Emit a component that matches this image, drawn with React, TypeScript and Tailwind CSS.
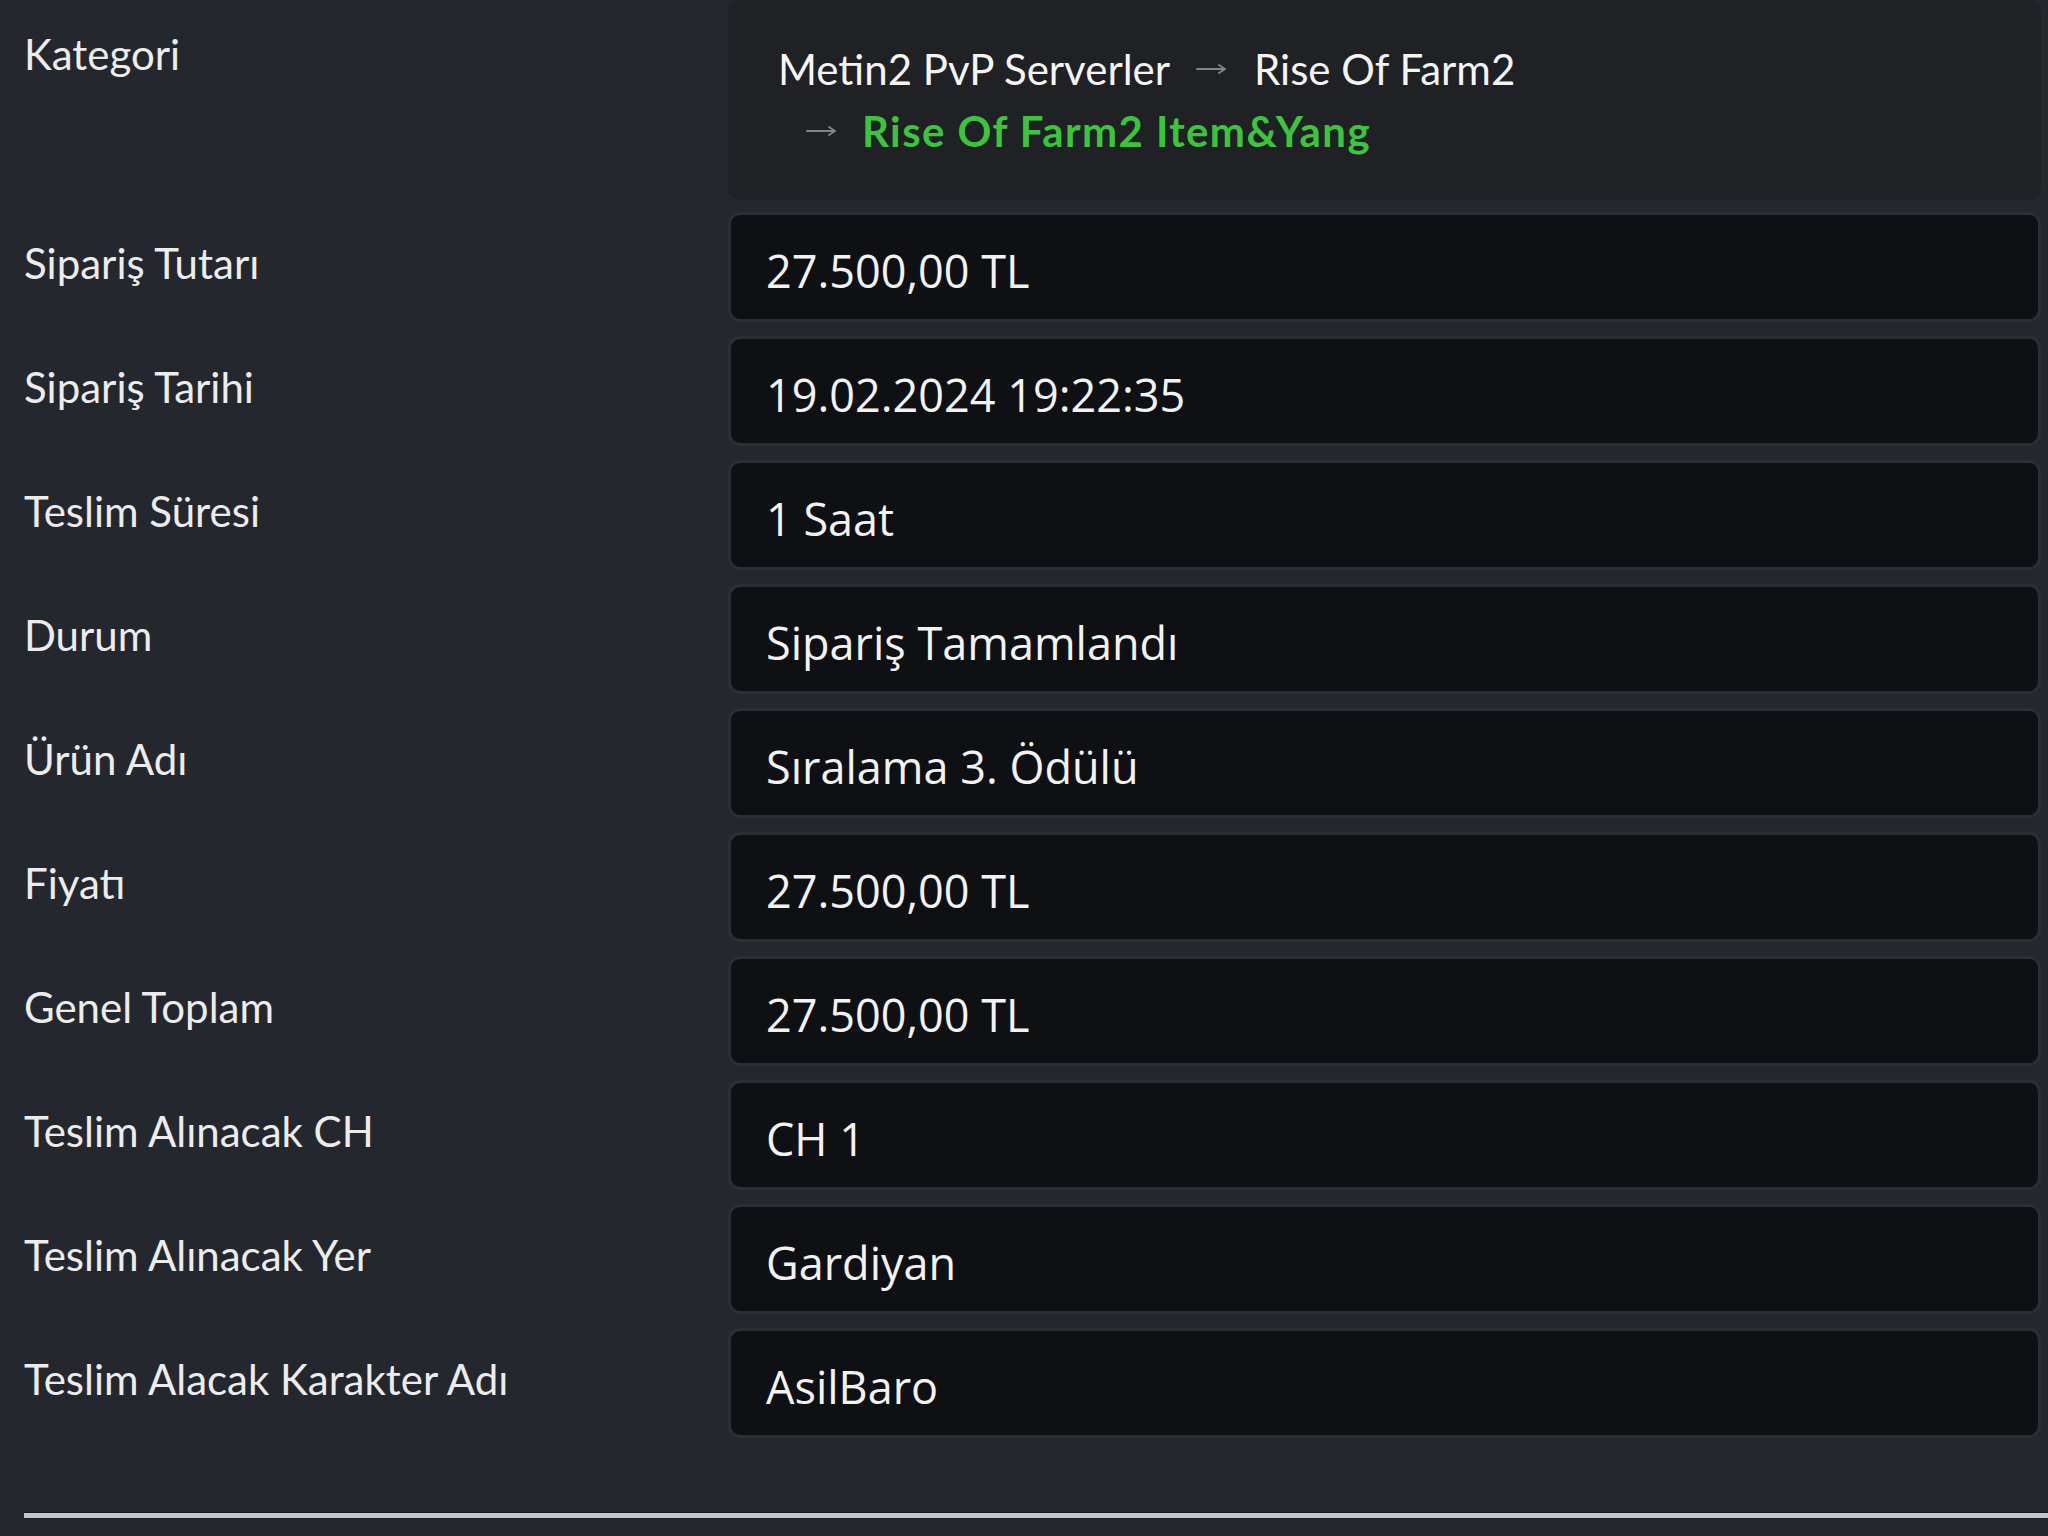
import React from 'react';

const rows: { label: string; value: string }[] = [
  { label: 'Sipariş Tutarı', value: '27.500,00 TL' },
  { label: 'Sipariş Tarihi', value: '19.02.2024 19:22:35' },
  { label: 'Teslim Süresi', value: '1 Saat' },
  { label: 'Durum', value: 'Sipariş Tamamlandı' },
  { label: 'Ürün Adı', value: 'Sıralama 3. Ödülü' },
  { label: 'Fiyatı', value: '27.500,00 TL' },
  { label: 'Genel Toplam', value: '27.500,00 TL' },
  { label: 'Teslim Alınacak CH', value: 'CH 1' },
  { label: 'Teslim Alınacak Yer', value: 'Gardiyan' },
  { label: 'Teslim Alacak Karakter Adı', value: 'AsilBaro' },
];

function Arrow() {
  return (
    <svg width="32" height="14" viewBox="0 0 32 14" className="inline-block">
      <path d="M1 7 H29 M23 3 L29 7 L23 11" fill="none" stroke="#80848b" strokeWidth="2" strokeLinecap="round" strokeLinejoin="round" />
    </svg>
  );
}

export default function App() {
  return (
    <div className="min-h-screen w-full bg-[#25272e] pl-[24px] font-['Lato','Noto_Sans',sans-serif] text-[#ececec]">
      {/* Kategori */}
      <div className="flex">
        <div className="w-[704px] shrink-0 pt-[29px] text-[42px] leading-[1.2]">Kategori</div>
        <div className="h-[200px] w-[1313px] rounded-[12px] bg-[#1f2125] pl-[50px] pt-[38px] text-[42px] leading-[62px]">
          <div className="flex items-center text-[#f4f4f4]">
            <span>Metin2 PvP Serverler</span>
            <span className="mx-[26px] flex items-center"><Arrow /></span>
            <span>Rise Of Farm2</span>
          </div>
          <div className="flex items-center pl-[28px]">
            <span className="mr-[24px] flex items-center"><Arrow /></span>
            <span className="font-bold tracking-[1.4px] text-[#3cc53c]">Rise Of Farm2 Item&amp;Yang</span>
          </div>
        </div>
      </div>

      {/* Detaylar */}
      <div className="mt-[12px] flex flex-col gap-[14px]">
        {rows.map((r) => (
          <div key={r.label} className="flex">
            <div className="w-[704px] shrink-0 pt-[26px] text-[42px] leading-[1.2]">{r.label}</div>
            <div className="box-border h-[110px] w-[1313px] rounded-[12px] border-[3px] border-[#2b2e34] bg-[#0f1013] pl-[35px] pt-[26px] font-['Open_Sans','Noto_Sans',sans-serif] text-[45px] leading-[60px] text-[#f2f2f2]">
              {r.value}
            </div>
          </div>
        ))}
      </div>

      <div className="mt-[74px] h-[7px] border-y border-[#17181c] bg-[#c4c6c9]" />
    </div>
  );
}
